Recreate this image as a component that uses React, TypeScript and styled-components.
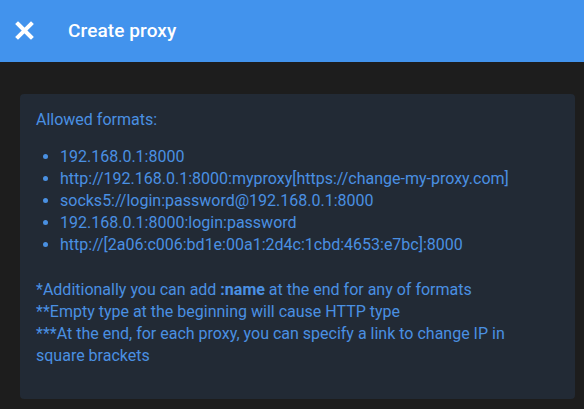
import React from "react";
import styled, { createGlobalStyle } from "styled-components";

const Global = createGlobalStyle`
  html, body { margin: 0; padding: 0; background: #1d1d1d; }
  body { font-family: Roboto, "Liberation Sans", Arial, sans-serif; }
  * { box-sizing: border-box; }
`;

const Page = styled.div`
  min-height: 409px;
  background: #1d1d1d;
  display: flex;
  flex-direction: column;
`;

const Header = styled.header`
  height: 62px;
  background: #4293ed;
  display: flex;
  align-items: center;
  padding: 0 0 2px 15px;
  gap: 34px;
`;

const CloseButton = styled.button`
  width: 19px;
  height: 19px;
  padding: 0;
  border: 0;
  background: transparent;
  display: flex;
  align-items: center;
  justify-content: center;
  cursor: pointer;
`;

const Title = styled.h1`
  margin: 0;
  color: #ffffff;
  font-size: 19px;
  font-weight: 500;
  letter-spacing: 0.1px;
`;

const Content = styled.main`
  padding: 32px 9px 10px 20px;
`;

const Card = styled.section`
  background: #222a35;
  border-radius: 4px;
  padding: 15px 26px 32px 16px;
  color: #4a90e2;
  font-size: 16px;
  line-height: 22px;
`;

const Paragraph = styled.p`
  margin: 0;
`;

const List = styled.ul`
  margin: 15px 0 23px;
  padding-left: 24px;
  list-style: disc;
`;

const Item = styled.li``;

const Strong = styled.b`
  font-weight: 700;
`;

const formats = [
  "192.168.0.1:8000",
  "http://192.168.0.1:8000:myproxy[https://change-my-proxy.com]",
  "socks5://login:password@192.168.0.1:8000",
  "192.168.0.1:8000:login:password",
  "http://[2a06:c006:bd1e:00a1:2d4c:1cbd:4653:e7bc]:8000",
];

export default function App() {
  return (
    <>
      <Global />
      <Page>
        <Header>
          <CloseButton aria-label="Close">
            <svg width="19" height="19" viewBox="0 0 19 19">
              <path
                d="M3 3 L16 16 M16 3 L3 16"
                stroke="#ffffff"
                strokeWidth="4"
                strokeLinecap="square"
                fill="none"
              />
            </svg>
          </CloseButton>
          <Title>Create proxy</Title>
        </Header>
        <Content>
          <Card>
            <Paragraph>Allowed formats:</Paragraph>
            <List>
              {formats.map((f) => (
                <Item key={f}>{f}</Item>
              ))}
            </List>
            <Paragraph>
              *Additionally you can add <Strong>:name</Strong> at the end for any of formats
            </Paragraph>
            <Paragraph>**Empty type at the beginning will cause HTTP type</Paragraph>
            <Paragraph>
              ***At the end, for each proxy, you can specify a link to change IP in square brackets
            </Paragraph>
          </Card>
        </Content>
      </Page>
    </>
  );
}
